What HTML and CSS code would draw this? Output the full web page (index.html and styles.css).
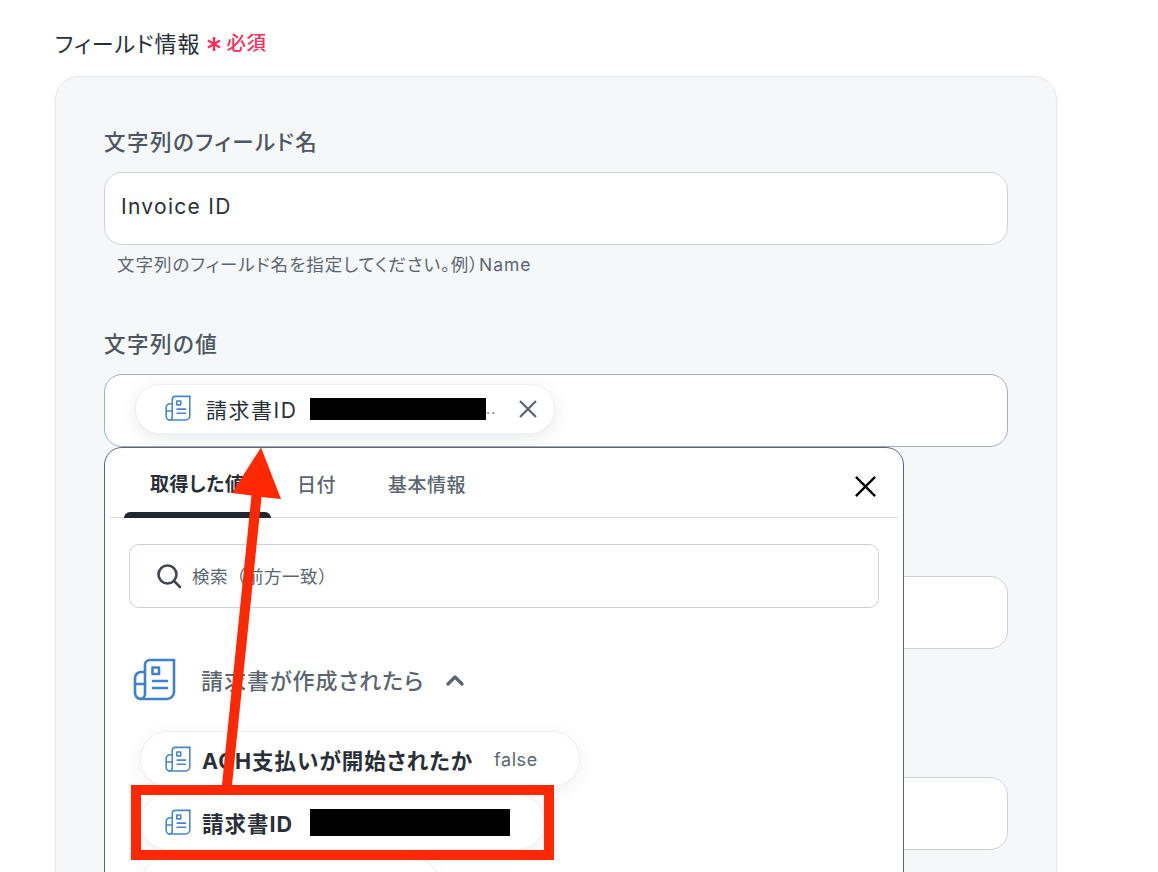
FILE: index.html
```html
<!DOCTYPE html>
<html lang="ja">
<head>
<meta charset="utf-8">
<title>フィールド情報</title>
<link rel="stylesheet" href="styles.css">
</head>
<body>
<svg class="defs" width="0" height="0" aria-hidden="true">
  <symbol id="doc" viewBox="0 0 43 44">
    <g fill="none" stroke="currentColor" stroke-width="2.6" stroke-linecap="round" stroke-linejoin="round">
      <path d="M41 2H17a5 5 0 0 0-5 5v29a5 5 0 0 1-5 5"/>
      <path d="M12 14H8a6 6 0 0 0-6 6v15a6 6 0 0 0 6 6h26a7 7 0 0 0 7-7V2"/>
      <path d="M2 26h10"/>
      <path d="M19.500 9.500h6.500v6.500h-6.500zM20 23h14M20 30h14"/>
    </g>
  </symbol>
</svg>
<main class="page">
  <h1 class="title">フィールド情報
    <svg class="star" viewBox="0 0 16 16" aria-hidden="true"><path d="M8 1v14M2 4.500l12 7M14 4.500l-12 7"/></svg>
    <span class="req">必須</span></h1>
  <section class="panel">
    <div class="field">
      <div class="label">文字列のフィールド名</div>
      <div class="input">Invoice ID</div>
      <div class="hint">文字列のフィールド名を指定してください。例）Name</div>
    </div>
    <div class="field">
      <div class="label">文字列の値</div>
      <div class="input holder">
        <div class="chip">
          <svg class="ic"><use href="#doc"/></svg>
          <span class="chip-name">請求書ID</span>
          <span class="mask mask-a"></span><span class="dots">..</span>
          <svg class="chip-x" viewBox="0 0 20 20"><path d="M2 2l16 16M18 2L2 18"/></svg>
        </div>
        <div class="drop">
          <div class="tabs">
            <span class="tab on">取得した値</span>
            <span class="tab date">日付</span>
            <span class="tab">基本情報</span>
            <svg class="drop-x" viewBox="0 0 24 24"><path d="M2 2l20 20M22 2L2 22"/></svg>
          </div>
          <div class="search">
            <svg class="glass" viewBox="0 0 26 26"><circle cx="11.500" cy="11.500" r="9"/><path d="M18 18l6 6"/></svg>
            <span>検索（前方一致）</span>
          </div>
          <div class="group">
            <svg class="ic-big"><use href="#doc"/></svg>
            <span class="group-name">請求書が作成されたら</span>
            <svg class="chev" viewBox="0 0 20 12"><path d="M3 10l7-7 7 7"/></svg>
          </div>
          <div class="rows">
            <div class="row">
              <svg class="ic-row"><use href="#doc"/></svg>
              <b class="row-name">ACH支払いが開始されたか</b>
              <span class="row-val">false</span>
            </div>
            <div class="row">
              <svg class="ic-row"><use href="#doc"/></svg>
              <b class="row-name">請求書ID</b>
              <span class="mask mask-b"></span>
            </div>
            <div class="row stub"></div>
          </div>
        </div>
      </div>
    </div>
    <div class="field short"><div class="label"></div><div class="input"></div><div class="hint"></div></div>
    <div class="field"><div class="label"></div><div class="input"></div><div class="hint"></div></div>
  </section>
</main>
<div class="redbox"></div>
<svg class="arrow" viewBox="0 0 1158 872" aria-hidden="true">
  <path d="M261 447.500L281 499 261.500 497 232 785 222 785 251.500 495.500 232 493Z"/>
</svg>
</body>
</html>
```
FILE: styles.css
```css
* { box-sizing: border-box; }
html, body { margin: 0; height: 872px; overflow: hidden; background: #fff; }
body {
  font-family: Inter, "Noto Sans CJK JP", sans-serif;
  color: #2a2f37;
  font-feature-settings: "palt";
}
.defs { position: absolute; }
.page { padding: 27px 0 0 55px; width: 1057px; }
.title {
  display: flex; align-items: center;
  margin: 0 0 20px; height: 29px;
  font-size: 22px; font-weight: 400; letter-spacing: 1px; white-space: nowrap;
}
.star { width: 16px; height: 16px; margin: 5px 5px 0 5px; fill: none; stroke: #f5305e; stroke-width: 2.4; }
.req { color: #f5305e; font-size: 19.500px; font-weight: 500; letter-spacing: .5px; }
.panel {
  background: #f6f7f9; border: 1px solid #e2e5ea; border-radius: 24px;
  padding: 50px 48px 0; height: 900px;
}
.field { height: 202px; }
.field.short { height: 201px; }
.label { height: 30px; line-height: 30px; margin-bottom: 15px; font-size: 21.500px; font-weight: 500; color: #4d5661; letter-spacing: 1.500px; }
.input {
  height: 73px; background: #fff; border: 1px solid #ccd2dc; border-radius: 18px;
  padding: 0 16px 5px; display: flex; align-items: center;
  font-size: 21px; letter-spacing: 1.300px; color: #2a2f37;
}
.hint { margin: 7px 0 0 13px; height: 24px; line-height: 26px; font-size: 17.500px; color: #5b6570; letter-spacing: 1px; white-space: nowrap; }
.holder { position: relative; padding: 0 0 0 30px; border-color: #a5aeba; }
.chip {
  width: 420px; height: 50px; margin-top: -4px; display: flex; align-items: center;
  padding-left: 29px; background: #fff; border: 1px solid #eef0f2; border-radius: 25px;
  box-shadow: 0 4px 16px rgba(40, 50, 70, .10);
}
.ic { width: 26px; height: 27px; color: #4a86c5; }
.chip-name { margin-left: 15px; width: 104px; font-size: 21px; letter-spacing: 1.500px; white-space: nowrap; }
.mask { display: block; background: #000; flex: none; }
.mask-a { width: 176px; height: 22px; }
.dots { width: 22px; color: #5b6570; font-size: 14px; line-height: 22px; }
.chip-x { width: 20px; height: 20px; margin-left: 10px; fill: none; stroke: #5b6570; stroke-width: 2.2; }
.drop {
  position: absolute; left: -1px; top: 72px; width: 800px; height: 500px;
  background: #fff; border: 1px solid #5d6570; border-radius: 18px;
  padding: 0 5px; letter-spacing: 0;
}
.tabs {
  position: relative; height: 70px; display: flex; align-items: center; padding: 0 0 0 14px;
  border-bottom: 1px solid #d6dae0;
}
.tab { font-size: 19px; font-weight: 500; color: #5b6570; margin-top: 2px; letter-spacing: .5px; }
.tab.on {
  width: 147px; height: 70px; line-height: 74px; margin: 0; padding-left: 26px;
  color: #2a2f37; font-weight: 600; position: relative; white-space: nowrap;
}
.tab.on::after {
  content: ""; position: absolute; left: 0; right: 0; bottom: 0; height: 6px;
  background: #23282f; border-radius: 6px 6px 0 0;
}
.tab.date { margin: 2px 52px 0 26px; }
.drop-x {
  position: absolute; right: 21px; top: 27px; width: 23px; height: 23px;
  fill: none; stroke: #000; stroke-width: 2.400;
}
.search {
  margin: 26px 19px 0 19px; height: 64px; border: 1px solid #ccd2dc; border-radius: 10px;
  display: flex; align-items: center; padding: 0 0 2px 26px; font-size: 17.500px; color: #5b6570;
  font-feature-settings: normal; letter-spacing: .5px;
}
.glass { width: 26px; height: 26px; margin: 2px 10px 0 0; fill: none; stroke: #3f4750; stroke-width: 2.6; stroke-linecap: round; }
.group { display: flex; align-items: center; margin: 49px 0 0 23px; height: 46px; }
.ic-big { width: 43px; height: 44px; color: #3f82c6; }
.group-name { margin: -3px 0 0 25px; font-size: 22px; font-weight: 500; color: #5b6570; letter-spacing: 1px; }
.chev { width: 20px; height: 12px; margin: 0 0 0 21px; fill: none; stroke: #5b6570; stroke-width: 3.200; stroke-linecap: round; stroke-linejoin: round; }
.rows { margin: 28px 0 0 30px; display: flex; flex-direction: column; gap: 7px; align-items: flex-start; }
.row {
  height: 56px; display: flex; align-items: center; padding: 0 24px;
  background: #fff; border: 1px solid #eef0f2; border-radius: 28px;
  box-shadow: 0 4px 16px rgba(40, 50, 70, .08);
}
.row:nth-child(1) { width: 440px; }
.row:nth-child(2) { width: 405px; }
.row.stub { width: 300px; }
.ic-row { width: 26px; height: 27px; color: #4a86c5; }
.row-name { margin-left: 11px; font-size: 21.500px; font-weight: 700; color: #2a2f37; letter-spacing: 1px; }
.row:nth-child(2) .row-name { width: 108px; }
.row-val { margin: 0 0 0 21px; font-size: 18px; color: #5b6570; letter-spacing: .6px; }
.mask-b { width: 200px; height: 27px; }
.redbox {
  position: absolute; left: 131px; top: 785px; width: 423px; height: 75px;
  border: 10px solid #ff2800;
}
.arrow { position: absolute; left: 0; top: 0; width: 1158px; height: 872px; fill: #ff2800; pointer-events: none; }
```
